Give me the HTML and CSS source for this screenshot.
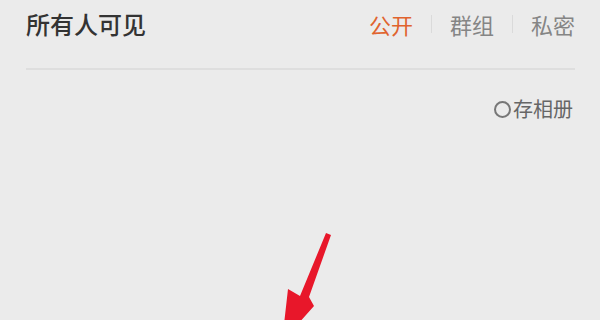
FILE: index.html
```html
<!DOCTYPE html>
<html>
<head>
  <meta charset="utf-8" />
  <link rel="stylesheet" href="styles.css">
</head>
<body>
  <div class="head">
    <span class="title">所有人可见</span>
    <div class="tabs">
      <span class="tab on">公开</span>
      <span class="sep"></span>
      <span class="tab">群组</span>
      <span class="sep"></span>
      <span class="tab">私密</span>
    </div>
  </div>
  <div class="album">
    <span class="ring"></span>存相册
  </div>
  <svg class="arrow" width="600" height="320" viewBox="0 0 600 320">
    <polygon points="326,233 331,235 309,297 314,306 282,342 288,289 300,296" fill="#e8172a"/>
  </svg>
</body>
</html>
```

FILE: styles.css
```css
body {
  margin: 0;
  background: #ebebeb;
  font-family: "Noto Sans CJK SC", "Noto Sans", sans-serif;
  width: 600px;
  height: 320px;
  overflow: hidden;
}
.head {
  margin: 0 25px 0 26px;
  height: 68px;
  border-bottom: 2px solid #dedede;
  display: flex;
  justify-content: space-between;
  align-items: flex-start;
}
.title {
  font-size: 24px;
  line-height: 24px;
  margin-top: 12px;
  font-weight: 500;
  color: #333;
}
.tabs {
  display: flex;
  align-items: center;
  margin-top: 12px;
}
.tab {
  font-size: 22px;
  line-height: 24px;
  color: #858585;
}
.tab.on {
  color: #e0632e;
}
.sep {
  width: 1px;
  height: 18px;
  background: #dadada;
  margin: 0 18px 0 18px;
}
.album {
  display: flex;
  justify-content: flex-end;
  align-items: center;
  margin: 28px 27px 0 0;
  font-size: 20px;
  line-height: 22px;
  color: #666;
}
.ring {
  width: 13px;
  height: 13px;
  border: 2px solid #777;
  border-radius: 50%;
  margin-right: 2px;
}
.arrow {
  position: absolute;
  left: 0;
  top: 0;
  pointer-events: none;
}
```
